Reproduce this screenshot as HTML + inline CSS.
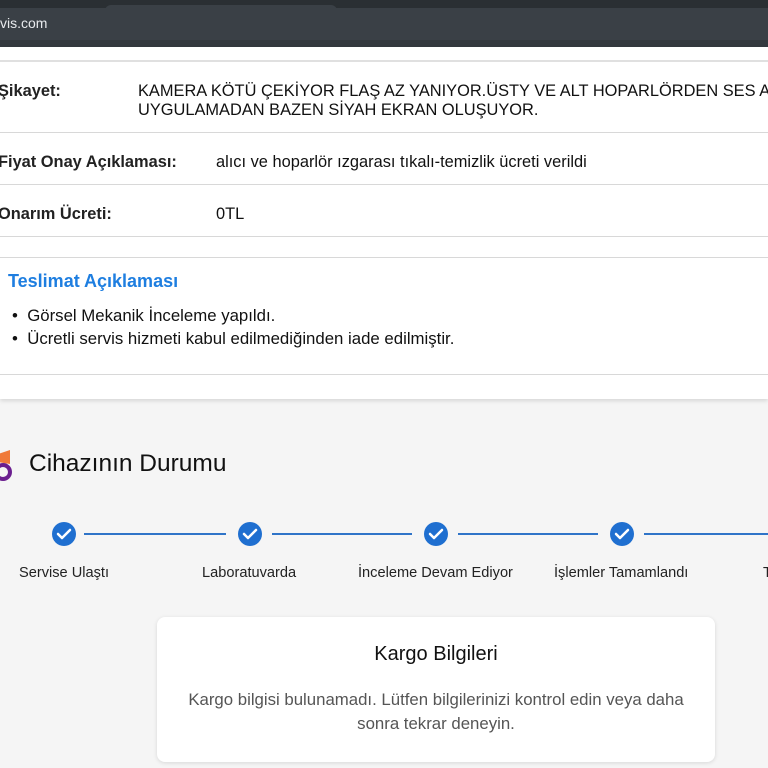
<!DOCTYPE html>
<html><head><meta charset="utf-8"><style>
body{margin:0;width:768px;height:768px;overflow:hidden;background:#f5f5f5;font-family:"Liberation Sans",Arial,sans-serif;position:relative}
.a{position:absolute}
.lbl{font-weight:bold;font-size:16.4px;color:#222}
.val{font-size:16.4px;color:#111}
.hr{position:absolute;left:0;width:768px;height:1px;background:#d8d8d8}
.st{font-size:14.6px;color:#222}
</style></head><body>
<div class="a" style="left:0;top:0;width:768px;height:8px;background:#2a2f33"></div>
<div class="a" style="left:105px;top:5px;width:232px;height:6px;background:#3a4046;border-radius:6px 6px 0 0"></div>
<div class="a" style="left:0;top:8px;width:768px;height:32px;background:#3a4046"></div>
<div class="a" style="left:0;top:15px;color:#e8eaed;font-size:14px">vis.com</div>
<div class="a" style="left:0;top:40px;width:768px;height:7px;background:#33393e"></div>
<div class="a" style="left:0;top:47px;width:768px;height:352px;background:#fff;box-shadow:0 2px 4px rgba(0,0,0,.12)"></div>
<div class="hr" style="top:60px;height:2px;background:#e0e0e0"></div>
<div class="a lbl" style="left:-2px;top:82px">Şikayet:</div>
<div class="a val" style="left:138px;top:82px;line-height:19px;white-space:nowrap">KAMERA KÖTÜ ÇEKİYOR FLAŞ AZ YANIYOR.ÜSTY VE ALT HOPARLÖRDEN SES A<br>UYGULAMADAN BAZEN SİYAH EKRAN OLUŞUYOR.</div>
<div class="hr" style="top:132px"></div>
<div class="a lbl" style="left:-2px;top:153px">Fiyat Onay Açıklaması:</div>
<div class="a val" style="left:216px;top:153px">alıcı ve hoparlör ızgarası tıkalı-temizlik ücreti verildi</div>
<div class="hr" style="top:184px"></div>
<div class="a lbl" style="left:-2px;top:205px">Onarım Ücreti:</div>
<div class="a val" style="left:216px;top:205px">0TL</div>
<div class="hr" style="top:236px"></div>
<div class="hr" style="top:257px"></div>
<div class="a" style="left:8px;top:271px;font-size:18px;font-weight:bold;color:#1e7ee0">Teslimat Açıklaması</div>
<div class="a val" style="left:12px;top:304px;line-height:23px;font-size:16.8px">•&nbsp; Görsel Mekanik İnceleme yapıldı.<br>•&nbsp; Ücretli servis hizmeti kabul edilmediğinden iade edilmiştir.</div>
<div class="hr" style="top:374px"></div>
<svg class="a" style="left:-4px;top:448px" width="18" height="36" viewBox="0 0 18 36"><path d="M2 6 L14 2 L14 16 L2 14Z" fill="#f07a3a"/><circle cx="7" cy="24" r="7" fill="none" stroke="#6b1f8f" stroke-width="4"/></svg>
<div class="a" style="left:29px;top:450px;font-size:24.5px;color:#111">Cihazının Durumu</div>
<div class="a" style="left:76px;top:533px;width:692px;height:2px;background:#2f74c8"></div>
<svg class="a" style="left:0;top:520px" width="768" height="28">
<g fill="#f5f5f5"><rect x="40" y="0" width="44" height="28"/><rect x="226" y="0" width="46" height="28"/><rect x="412" y="0" width="46" height="28"/><rect x="598" y="0" width="46" height="28"/></g>
<g fill="#1f6fd0"><circle cx="64" cy="14" r="12"/><circle cx="250" cy="14" r="12"/><circle cx="436" cy="14" r="12"/><circle cx="622" cy="14" r="12"/></g>
<g fill="none" stroke="#fff" stroke-width="2.5" stroke-linecap="round" stroke-linejoin="round"><path d="M58 14l4 4 8-8"/><path d="M244 14l4 4 8-8"/><path d="M430 14l4 4 8-8"/><path d="M616 14l4 4 8-8"/></g>
</svg>
<div class="a st" style="left:19px;top:565px">Servise Ulaştı</div>
<div class="a st" style="left:202px;top:565px">Laboratuvarda</div>
<div class="a st" style="left:358px;top:565px">İnceleme Devam Ediyor</div>
<div class="a st" style="left:554px;top:565px">İşlemler Tamamlandı</div>
<div class="a st" style="left:763px;top:565px">T</div>
<div class="a" style="left:157px;top:617px;width:558px;height:145px;background:#fff;border-radius:8px;box-shadow:0 1px 4px rgba(0,0,0,.12)"></div>
<div class="a" style="left:157px;top:643px;width:558px;text-align:center;font-size:20px;color:#111">Kargo Bilgileri</div>
<div class="a" style="left:157px;top:688px;width:558px;text-align:center;font-size:16.8px;color:#555;line-height:24px">Kargo bilgisi bulunamadı. Lütfen bilgilerinizi kontrol edin veya daha<br>sonra tekrar deneyin.</div>
</body></html>
